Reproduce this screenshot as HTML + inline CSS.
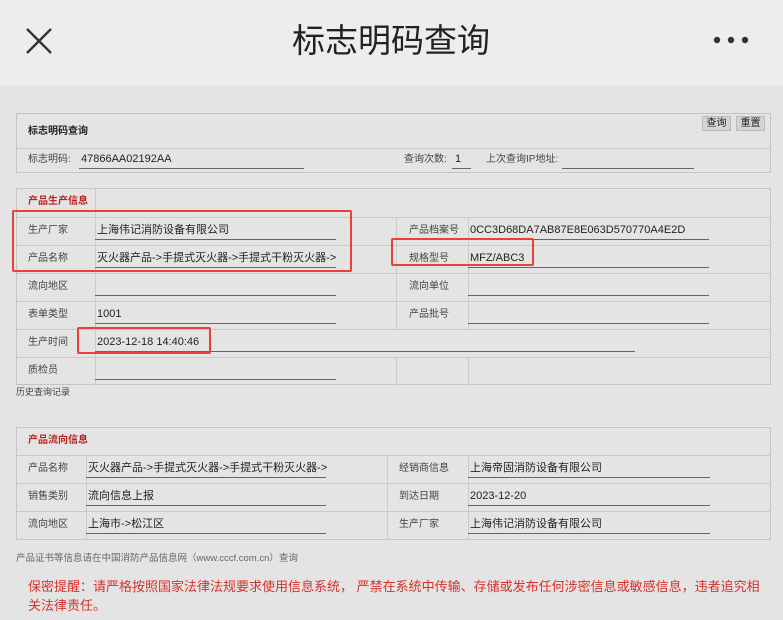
<!DOCTYPE html>
<html><head><meta charset="utf-8"><style>
*{margin:0;padding:0;box-sizing:border-box}
body{width:783px;height:620px;overflow:hidden;background:#e4e4e4;font-family:"Liberation Sans","Noto Sans CJK SC",sans-serif;color:#333;position:relative}
.a{position:absolute;white-space:nowrap}
.hd{position:absolute;left:0;top:0;width:783px;height:86px;background:#ededed}
.box{position:absolute;border:1px solid #c4c4c4}
.hl{position:absolute;height:1px;background:#cacaca}
.vl{position:absolute;width:1px;background:#cacaca}
.ul{position:absolute;height:1px;background:#666}
.t{position:absolute;font-size:10px;color:#444;white-space:nowrap;line-height:12px}
.v{position:absolute;font-size:11px;color:#222;white-space:nowrap;line-height:13px}
.rb{position:absolute;border:2px solid #e8403a;border-radius:2px}
.red{color:#b8231e}
.btn{position:absolute;top:116px;height:15px;background:#d4d4d4;border:1px solid #bbb;font-size:10px;line-height:13px;text-align:center;color:#222}
</style></head><body>
<div class="hd"></div>
<svg class="a" style="left:25px;top:27px" width="28" height="28" viewBox="0 0 28 28"><path d="M2 2L26 26M26 2L2 26" stroke="#333" stroke-width="2.4"/></svg>
<div class="a" style="left:292px;top:21px;font-size:33px;color:#222;line-height:40px">标志明码查询</div>
<svg class="a" style="left:713px;top:36px" width="38" height="8"><circle cx="4" cy="4" r="3.2" fill="#333"/><circle cx="18" cy="4" r="3.2" fill="#333"/><circle cx="32" cy="4" r="3.2" fill="#333"/></svg>

<!-- box1 -->
<div class="box" style="left:16px;top:113px;width:755px;height:60px"></div>
<div class="hl" style="left:16px;top:148px;width:755px"></div>
<div class="t" style="left:28px;top:126px;font-weight:bold;color:#222">标志明码查询</div>
<div class="btn" style="left:702px;width:29px">查询</div>
<div class="btn" style="left:736px;width:29px">重置</div>
<div class="t" style="left:28px;top:154px">标志明码:</div>
<div class="v" style="left:81px;top:153px">47866AA02192AA</div>
<div class="ul" style="left:79px;top:168px;width:225px"></div>
<div class="t" style="left:404px;top:154px">查询次数:</div>
<div class="v" style="left:455px;top:153px">1</div>
<div class="ul" style="left:452px;top:168px;width:19px"></div>
<div class="t" style="left:486px;top:154px">上次查询IP地址:</div>
<div class="ul" style="left:562px;top:168px;width:132px"></div>

<!-- box2 -->
<div class="box" style="left:16px;top:188px;width:755px;height:197px"></div>
<div class="vl" style="left:95px;top:188px;height:197px"></div>
<div class="hl" style="left:16px;top:217px;width:755px"></div>
<div class="hl" style="left:16px;top:245px;width:755px"></div>
<div class="hl" style="left:16px;top:273px;width:755px"></div>
<div class="hl" style="left:16px;top:301px;width:755px"></div>
<div class="hl" style="left:16px;top:329px;width:755px"></div>
<div class="hl" style="left:16px;top:357px;width:755px"></div>
<div class="vl" style="left:396px;top:217px;height:112px"></div>
<div class="vl" style="left:468px;top:217px;height:112px"></div>
<div class="vl" style="left:396px;top:357px;height:28px"></div>
<div class="vl" style="left:468px;top:357px;height:28px"></div>
<div class="t red" style="left:28px;top:196px;font-weight:bold">产品生产信息</div>
<div class="t" style="left:28px;top:225px">生产厂家</div>
<div class="t" style="left:28px;top:253px">产品名称</div>
<div class="t" style="left:28px;top:281px">流向地区</div>
<div class="t" style="left:28px;top:309px">表单类型</div>
<div class="t" style="left:28px;top:337px">生产时间</div>
<div class="t" style="left:28px;top:365px">质检员</div>
<div class="v" style="left:97px;top:224px">上海伟记消防设备有限公司</div>
<div class="v" style="left:97px;top:252px">灭火器产品-&gt;手提式灭火器-&gt;手提式干粉灭火器-&gt;</div>
<div class="v" style="left:97px;top:308px">1001</div>
<div class="v" style="left:97px;top:336px">2023-12-18 14:40:46</div>
<div class="ul" style="left:95px;top:239px;width:241px"></div>
<div class="ul" style="left:95px;top:267px;width:241px"></div>
<div class="ul" style="left:95px;top:295px;width:241px"></div>
<div class="ul" style="left:95px;top:323px;width:241px"></div>
<div class="ul" style="left:95px;top:351px;width:540px"></div>
<div class="ul" style="left:95px;top:379px;width:241px"></div>
<div class="t" style="left:409px;top:225px">产品档案号</div>
<div class="t" style="left:409px;top:253px">规格型号</div>
<div class="t" style="left:409px;top:281px">流向单位</div>
<div class="t" style="left:409px;top:309px">产品批号</div>
<div class="v" style="left:470px;top:224px">0CC3D68DA7AB87E8E063D570770A4E2D</div>
<div class="v" style="left:470px;top:252px">MFZ/ABC3</div>
<div class="ul" style="left:468px;top:239px;width:241px"></div>
<div class="ul" style="left:468px;top:267px;width:241px"></div>
<div class="ul" style="left:468px;top:295px;width:241px"></div>
<div class="ul" style="left:468px;top:323px;width:241px"></div>
<div class="rb" style="left:12px;top:210px;width:340px;height:62px"></div>
<div class="rb" style="left:77px;top:327px;width:134px;height:27px"></div>
<div class="rb" style="left:391px;top:238px;width:143px;height:28px"></div>
<div class="t" style="left:16px;top:386px;font-size:9px">历史查询记录</div>

<!-- box3 -->
<div class="box" style="left:16px;top:427px;width:755px;height:113px"></div>
<div class="hl" style="left:16px;top:455px;width:755px"></div>
<div class="hl" style="left:16px;top:483px;width:755px"></div>
<div class="hl" style="left:16px;top:511px;width:755px"></div>
<div class="vl" style="left:86px;top:455px;height:85px"></div>
<div class="vl" style="left:387px;top:455px;height:85px"></div>
<div class="vl" style="left:468px;top:455px;height:85px"></div>
<div class="t red" style="left:28px;top:435px;font-weight:bold">产品流向信息</div>
<div class="t" style="left:28px;top:463px">产品名称</div>
<div class="t" style="left:28px;top:491px">销售类别</div>
<div class="t" style="left:28px;top:519px">流向地区</div>
<div class="v" style="left:88px;top:462px">灭火器产品-&gt;手提式灭火器-&gt;手提式干粉灭火器-&gt;</div>
<div class="v" style="left:88px;top:490px">流向信息上报</div>
<div class="v" style="left:88px;top:518px">上海市-&gt;松江区</div>
<div class="ul" style="left:86px;top:477px;width:240px"></div>
<div class="ul" style="left:86px;top:505px;width:240px"></div>
<div class="ul" style="left:86px;top:533px;width:240px"></div>
<div class="t" style="left:399px;top:463px">经销商信息</div>
<div class="t" style="left:399px;top:491px">到达日期</div>
<div class="t" style="left:399px;top:519px">生产厂家</div>
<div class="v" style="left:470px;top:462px">上海帝固消防设备有限公司</div>
<div class="v" style="left:470px;top:490px">2023-12-20</div>
<div class="v" style="left:470px;top:518px">上海伟记消防设备有限公司</div>
<div class="ul" style="left:468px;top:477px;width:242px"></div>
<div class="ul" style="left:468px;top:505px;width:242px"></div>
<div class="ul" style="left:468px;top:533px;width:242px"></div>

<div class="t" style="left:16px;top:553px;font-size:9.5px;color:#666">产品证书等信息请在中国消防产品信息网（www.cccf.com.cn）查询</div>
<div class="a" style="left:28px;top:577px;width:740px;font-size:13px;line-height:19px;color:#d8302a;white-space:normal">保密提醒：请严格按照国家法律法规要求使用信息系统， 严禁在系统中传输、存储或发布任何涉密信息或敏感信息，违者追究相关法律责任。</div>
</body></html>
